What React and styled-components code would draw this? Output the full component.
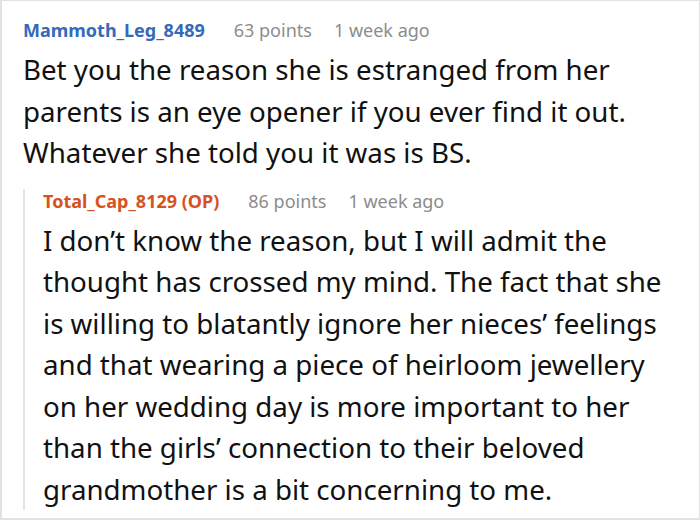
import React from "react";
import styled, { createGlobalStyle } from "styled-components";

const GlobalStyle = createGlobalStyle`
  html, body {
    margin: 0;
    padding: 0;
    background: #ffffff;
  }
  body {
    font-family: "Noto Sans", "Open Sans", sans-serif;
  }
`;

const Frame = styled.div`
  width: 700px;
  height: 520px;
  box-sizing: border-box;
  border: 1px solid #e2e2e2;
  border-left-width: 2px;
  border-bottom-width: 2px;
  padding: 17px 19px 0 21px;
  background: #fff;
  overflow: hidden;
`;

const Comment = styled.div`
  display: flex;
  flex-direction: column;
`;

const Reply = styled.div`
  margin-top: 15px;
  padding-left: 18px;
  border-left: 2px solid #e4e4e4;
  display: flex;
  flex-direction: column;
`;

const Header = styled.div`
  display: flex;
  align-items: baseline;
  font-size: 18px;
  line-height: 24px;
  margin-bottom: 7px;
`;

const Author = styled.span`
  font-weight: 700;
  color: ${(p) => (p.$op ? "#d6521f" : "#3569b9")};
  margin-right: 29px;
`;

const Meta = styled.span`
  color: #8c8c8c;
  margin-right: 22px;
`;

const Body = styled.p`
  margin: 0;
  font-size: 27.7px;
  line-height: 41.5px;
  color: #111111;
`;

function CommentHeader({ author, points, time, op }) {
  return (
    <Header>
      <Author $op={op}>{author}</Author>
      <Meta>{points}</Meta>
      <Meta>{time}</Meta>
    </Header>
  );
}

export default function App() {
  return (
    <>
      <GlobalStyle />
      <Frame>
        <Comment>
          <CommentHeader
            author="Mammoth_Leg_8489"
            points="63 points"
            time="1 week ago"
          />
          <Body>
            Bet you the reason she is estranged from her parents is an eye
            opener if you ever find it out. Whatever she told you it was is BS.
          </Body>
          <Reply>
            <CommentHeader
              author="Total_Cap_8129 (OP)"
              points="86 points"
              time="1 week ago"
              op
            />
            <Body>
              I don’t know the reason, but I will admit the thought has crossed
              my mind. The fact that she is willing to blatantly ignore her
              nieces’ feelings and that wearing a piece of heirloom jewellery on
              her wedding day is more important to her than the girls’
              connection to their beloved grandmother is a bit concerning to me.
            </Body>
          </Reply>
        </Comment>
      </Frame>
    </>
  );
}
